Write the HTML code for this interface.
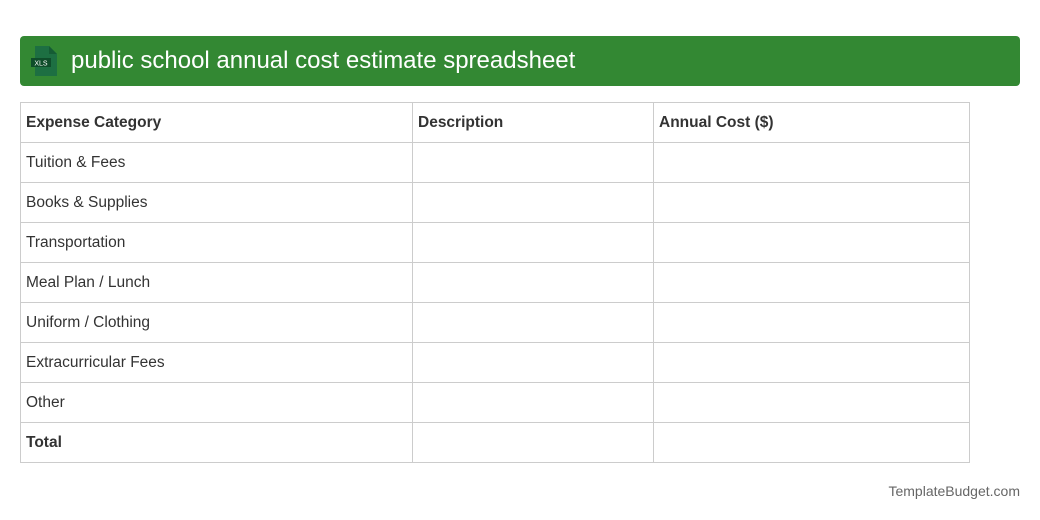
<!DOCTYPE html>
<html><head><meta charset="utf-8"><style>
body{margin:0;width:1040px;height:520px;background:#fff;font-family:"Liberation Sans",sans-serif;position:relative}
.hdr{position:absolute;left:20px;top:36px;width:1000px;height:50px;background:#338833;border-radius:4px}
.hdr .t{position:absolute;left:51px;top:0;line-height:50px;color:#fff;font-size:24px}
table{position:absolute;left:20px;top:102px;border-collapse:collapse;width:950px}
td{border:1px solid #ccc;height:39px;padding:0 0 0 5px;font-size:15.5px;color:#333}
.b{font-weight:bold}
.f{position:absolute;right:20px;top:483px;color:#666;font-size:14px}
</style></head><body>
<div class="hdr">
<svg style="position:absolute;left:11px;top:10px" width="28" height="30" viewBox="0 0 28 30">
<path d="M4 0h14l8 8v22H4z" fill="#1d6f42"/><path d="M18 0l8 8h-8z" fill="#155c34"/>
<rect x="0" y="12" width="20" height="9" fill="#0f4d2a"/>
<text x="10" y="19.5" font-size="7" fill="#fff" text-anchor="middle" font-family="Liberation Sans">XLS</text>
</svg>
<div class="t">public school annual cost estimate spreadsheet</div></div>
<table>
<tr><td class="b" style="width:386px">Expense Category</td><td class="b" style="width:235px">Description</td><td class="b">Annual Cost ($)</td></tr>
<tr><td>Tuition &amp; Fees</td><td></td><td></td></tr>
<tr><td>Books &amp; Supplies</td><td></td><td></td></tr>
<tr><td>Transportation</td><td></td><td></td></tr>
<tr><td>Meal Plan / Lunch</td><td></td><td></td></tr>
<tr><td>Uniform / Clothing</td><td></td><td></td></tr>
<tr><td>Extracurricular Fees</td><td></td><td></td></tr>
<tr><td>Other</td><td></td><td></td></tr>
<tr><td class="b">Total</td><td></td><td></td></tr>
</table>
<div class="f">TemplateBudget.com</div>
</body></html>
